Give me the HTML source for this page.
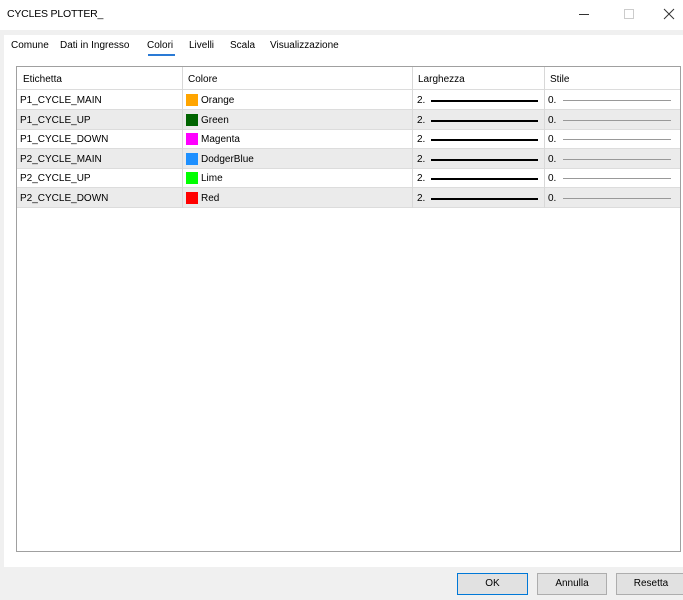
<!DOCTYPE html>
<html><head><meta charset="utf-8"><style>
*{margin:0;padding:0;box-sizing:border-box}
body{width:683px;height:600px;background:#f0f0f0;font-family:"Liberation Sans",sans-serif;font-size:10px;color:#000;position:relative;overflow:hidden}
.title{position:absolute;left:0;top:0;width:683px;height:30px;background:#fff}
.title span{position:absolute;left:7px;top:8px;font-size:10.5px;letter-spacing:-0.2px}
.panel{position:absolute;left:4px;top:35px;width:679px;height:532px;background:#fff}
.tab{position:absolute;top:40px;font-size:10px}
.ul{position:absolute;left:148px;top:54px;width:27px;height:2px;background:#2a7ad5}
.tbl{position:absolute;left:16px;top:66px;width:665px;height:486px;border:1px solid #a0a0a0;background:#fff}
.row{position:absolute;left:0;width:663px;height:20px;border-bottom:1px solid #dcdcdc}
.row.g{background:#ebebeb}
.c{position:absolute;top:5px}
.sep{position:absolute;top:0;width:1px;height:141px;background:#d8d8d8}
.sw{position:absolute;left:169px;top:4px;width:12px;height:12px}
.l2{position:absolute;left:414px;top:10px;width:107px;height:2px;background:#000}
.l1{position:absolute;left:546px;top:10px;width:108px;height:1px;background:#999}
.btn{position:absolute;top:573px;height:22px;border:1px solid #adadad;background:#e1e1e1;text-align:center;line-height:20px;font-size:10px}
</style></head><body>
<div class="title"><span>CYCLES PLOTTER_</span>
<div style="position:absolute;left:579px;top:14px;width:10px;height:1px;background:#333"></div>
<div style="position:absolute;left:624px;top:9px;width:10px;height:10px;border:1px solid #ccc"></div>
<svg style="position:absolute;left:663px;top:8px" width="12" height="12"><path d="M1 1L11 11M11 1L1 11" stroke="#333" stroke-width="1"/></svg>
</div>
<div class="panel"></div>
<div class="tab" style="left:11px">Comune</div>
<div class="tab" style="left:60px">Dati in Ingresso</div>
<div class="tab" style="left:147px">Colori</div>
<div class="tab" style="left:189px">Livelli</div>
<div class="tab" style="left:230px">Scala</div>
<div class="tab" style="left:270px">Visualizzazione</div>
<div class="ul"></div>
<div class="tbl">
<div class="row" style="top:0;height:23px"><span class="c" style="left:6px;top:7px">Etichetta</span><span class="c" style="left:171px;top:7px">Colore</span><span class="c" style="left:401px;top:7px">Larghezza</span><span class="c" style="left:533px;top:7px">Stile</span></div>
<div class="row" style="top:23px"><span class="c" style="left:3px">P1_CYCLE_MAIN</span><div class="sw" style="background:#ffa500"></div><span class="c" style="left:184px">Orange</span><span class="c" style="left:400px">2.</span><div class="l2"></div><span class="c" style="left:531px">0.</span><div class="l1"></div></div>
<div class="row g" style="top:43px"><span class="c" style="left:3px">P1_CYCLE_UP</span><div class="sw" style="background:#006400"></div><span class="c" style="left:184px">Green</span><span class="c" style="left:400px">2.</span><div class="l2"></div><span class="c" style="left:531px">0.</span><div class="l1"></div></div>
<div class="row" style="top:62px"><span class="c" style="left:3px">P1_CYCLE_DOWN</span><div class="sw" style="background:#ff00ff"></div><span class="c" style="left:184px">Magenta</span><span class="c" style="left:400px">2.</span><div class="l2"></div><span class="c" style="left:531px">0.</span><div class="l1"></div></div>
<div class="row g" style="top:82px"><span class="c" style="left:3px">P2_CYCLE_MAIN</span><div class="sw" style="background:#1e90ff"></div><span class="c" style="left:184px">DodgerBlue</span><span class="c" style="left:400px">2.</span><div class="l2"></div><span class="c" style="left:531px">0.</span><div class="l1"></div></div>
<div class="row" style="top:101px"><span class="c" style="left:3px">P2_CYCLE_UP</span><div class="sw" style="background:#00ff00"></div><span class="c" style="left:184px">Lime</span><span class="c" style="left:400px">2.</span><div class="l2"></div><span class="c" style="left:531px">0.</span><div class="l1"></div></div>
<div class="row g" style="top:121px"><span class="c" style="left:3px">P2_CYCLE_DOWN</span><div class="sw" style="background:#ff0000"></div><span class="c" style="left:184px">Red</span><span class="c" style="left:400px">2.</span><div class="l2"></div><span class="c" style="left:531px">0.</span><div class="l1"></div></div>
<div class="sep" style="left:165px"></div><div class="sep" style="left:395px"></div><div class="sep" style="left:527px"></div>
</div>
<div class="btn" style="left:457px;width:71px;border:1px solid #0078d7">OK</div>
<div class="btn" style="left:537px;width:70px">Annulla</div>
<div class="btn" style="left:616px;width:70px">Resetta</div>
</body></html>
